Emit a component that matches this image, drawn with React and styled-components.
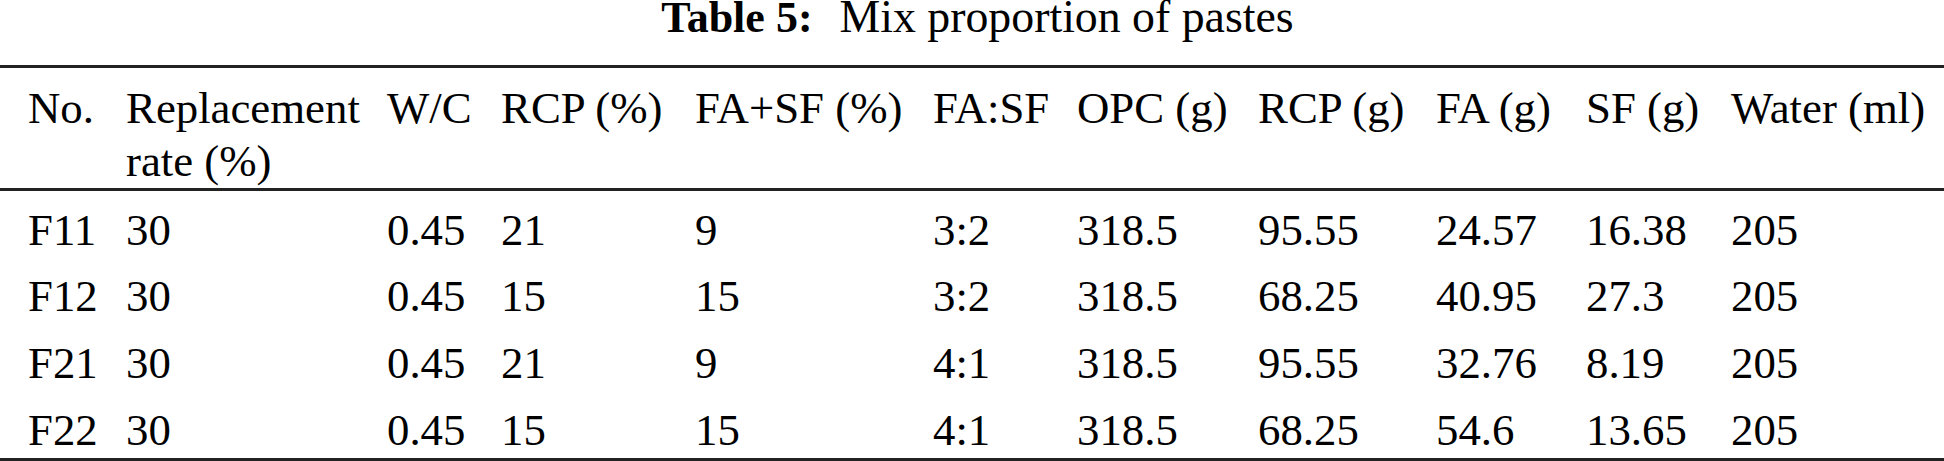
import styled, { createGlobalStyle } from 'styled-components';

const columns = [126, 261, 114, 194, 238, 144, 181, 178, 150, 145, 213];

const headers = [
	'No.',
	'Replacement rate (%)',
	'W/C',
	'RCP (%)',
	'FA+SF (%)',
	'FA:SF',
	'OPC (g)',
	'RCP (g)',
	'FA (g)',
	'SF (g)',
	'Water (ml)',
];

const rows = [
	['F11', '30', '0.45', '21', '9', '3:2', '318.5', '95.55', '24.57', '16.38', '205'],
	['F12', '30', '0.45', '15', '15', '3:2', '318.5', '68.25', '40.95', '27.3', '205'],
	['F21', '30', '0.45', '21', '9', '4:1', '318.5', '95.55', '32.76', '8.19', '205'],
	['F22', '30', '0.45', '15', '15', '4:1', '318.5', '68.25', '54.6', '13.65', '205'],
];

function App() {
	return (
		<>
			<GlobalStyle />
			<Page>
				<Caption>
					<Label>Table 5:</Label>
					Mix proportion of pastes
				</Caption>

				<Table>
					<colgroup>
						{columns.map((w, i) => (
							<col key={i} style={{ width: `${w}px` }} />
						))}
					</colgroup>
					<thead>
						<tr>
							{headers.map((h) => (
								<Th key={h}>{h}</Th>
							))}
						</tr>
					</thead>
					<tbody>
						{rows.map((row) => (
							<tr key={row[0]}>
								{row.map((cell, i) => (
									<Td key={i}>{cell}</Td>
								))}
							</tr>
						))}
					</tbody>
				</Table>
			</Page>
		</>
	);
}

const GlobalStyle = createGlobalStyle`
	html, body {
		margin: 0;
		padding: 0;
		background: #fff;
	}
`;

const Page = styled.div`
	width: 1944px;
	font-family: 'Liberation Serif', 'Times New Roman', serif;
	color: #000;
`;

const Caption = styled.div`
	display: flex;
	justify-content: center;
	align-items: baseline;
	padding-left: 11px;
	font-size: 45.8px;
	line-height: 33px;
	height: 34px;
	margin-bottom: 31px;
	white-space: nowrap;
`;

const Label = styled.b`
	font-size: 44px;
	font-weight: bold;
	margin-right: 27px;
`;

const Table = styled.table`
	width: 1944px;
	table-layout: fixed;
	border-collapse: separate;
	border-spacing: 0;
	border-top: 3px solid #222;
	border-bottom: 3px solid #222;
	font-size: 44.8px;
	line-height: 53.4px;
`;

const Th = styled.th`
	text-align: left;
	vertical-align: top;
	font-weight: normal;
	padding: 13.6px 0 0 0;
	border-bottom: 3px solid #222;

	&:first-child {
		padding-left: 28px;
	}
`;

const Td = styled.td`
	text-align: left;
	vertical-align: top;
	padding: 12.3px 0 1px 0;
	white-space: nowrap;

	&:first-child {
		padding-left: 28px;
	}
`;

export default App;
